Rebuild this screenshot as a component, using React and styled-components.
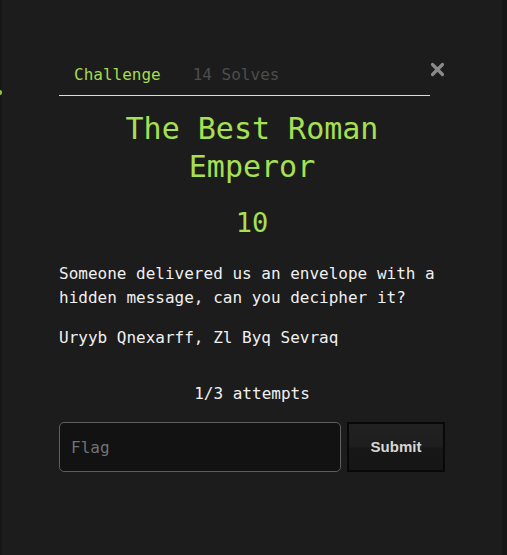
import React from "react";
import styled, { createGlobalStyle } from "styled-components";

const Global = createGlobalStyle`
  html, body { margin: 0; padding: 0; background: #1c1c1c; }
  body { font-family: "DejaVu Sans Mono", monospace; }
  * { box-sizing: border-box; }
`;

const Page = styled.div`
  display: flex;
  min-height: 555px;
  width: 507px;
`;

const Edge = styled.div`
  width: ${(p) => p.$w}px;
  background: #161616;
  display: flex;
  flex-direction: column;
  padding-top: ${(p) => p.$mark ? 90 : 0}px;
`;

const Mark = styled.span`
  display: block;
  width: 2px;
  height: 5px;
  background: #8fc43f;
  border-radius: 0 2px 2px 0;
`;

const Main = styled.main`
  flex: 1;
  background: #1c1c1c;
  padding-top: 54px;
`;

const Modal = styled.section`
  width: 386px;
  margin-left: 57px;
  color: #eeeeee;
`;

const Header = styled.div`
  display: flex;
  align-items: flex-start;
`;

const Tabs = styled.nav`
  flex: 1;
  display: flex;
  border-bottom: 1px solid #dcdcdc;
  margin-top: 1px;
`;

const Tab = styled.span`
  padding: 8px 16px 8px ${(p) => (p.$active ? 15 : 16)}px;
  font-size: 16px;
  line-height: 24px;
  color: ${(p) => (p.$active ? "#a3dc4c" : "#4d4d4d")};
`;

const Close = styled.button`
  width: 15px;
  height: 15px;
  margin-top: 8px;
  padding: 0;
  border: 0;
  background: none;
  display: flex;
`;

const Title = styled.h2`
  margin: 14px 0 0;
  text-align: center;
  font-size: 30px;
  line-height: 38px;
  font-weight: normal;
  color: #a7e052;
`;

const Value = styled.div`
  margin-top: 17px;
  text-align: center;
  font-size: 27px;
  line-height: 40px;
  color: #a7e052;
`;

const Text = styled.p`
  margin: ${(p) => p.$top}px 0 0;
  font-size: 16px;
  line-height: 24px;
  color: #f0f0f0;
  text-align: ${(p) => (p.$center ? "center" : "left")};
`;

const Form = styled.form`
  display: flex;
  gap: 6px;
  margin-top: 16px;
`;

const Input = styled.input`
  flex: 1;
  height: 50px;
  border: 1px solid #5e5e5e;
  border-radius: 5px;
  background: #121212;
  padding: 0 11px;
  font-family: "DejaVu Sans Mono", monospace;
  font-size: 16px;
  color: #eee;
  outline: none;
  &::placeholder { color: #6f7378; }
`;

const Submit = styled.button`
  width: 98px;
  height: 50px;
  border: 2px solid #080808;
  background: linear-gradient(#212121 0%, #1e1e1e 50%, #171717 52%, #161616 100%);
  color: #d6d6d6;
  font-family: "Liberation Sans", Arial, sans-serif;
  font-weight: bold;
  font-size: 15px;
  padding: 0 0 2px;
`;

export default function App() {
  return (
    <>
      <Global />
      <Page>
        <Edge $w={2} $mark>
          <Mark />
        </Edge>
        <Main>
          <Modal>
            <Header>
              <Tabs>
                <Tab $active>Challenge</Tab>
                <Tab>14 Solves</Tab>
              </Tabs>
              <Close aria-label="Close">
                <svg width="15" height="15" viewBox="0 0 15 15">
                  <path d="M2.5 2.5 L12.5 12.5 M12.5 2.5 L2.5 12.5" stroke="#8a8a8a" strokeWidth="3.2" strokeLinecap="round" />
                </svg>
              </Close>
            </Header>
            <Title>The Best Roman Emperor</Title>
            <Value>10</Value>
            <Text $top={19}>Someone delivered us an envelope with a hidden message, can you decipher it?</Text>
            <Text $top={16}>Uryyb Qnexarff, Zl Byq Sevraq</Text>
            <Text $top={32} $center>1/3 attempts</Text>
            <Form onSubmit={(e) => e.preventDefault()}>
              <Input placeholder="Flag" />
              <Submit type="submit">Submit</Submit>
            </Form>
          </Modal>
        </Main>
        <Edge $w={5} />
      </Page>
    </>
  );
}
